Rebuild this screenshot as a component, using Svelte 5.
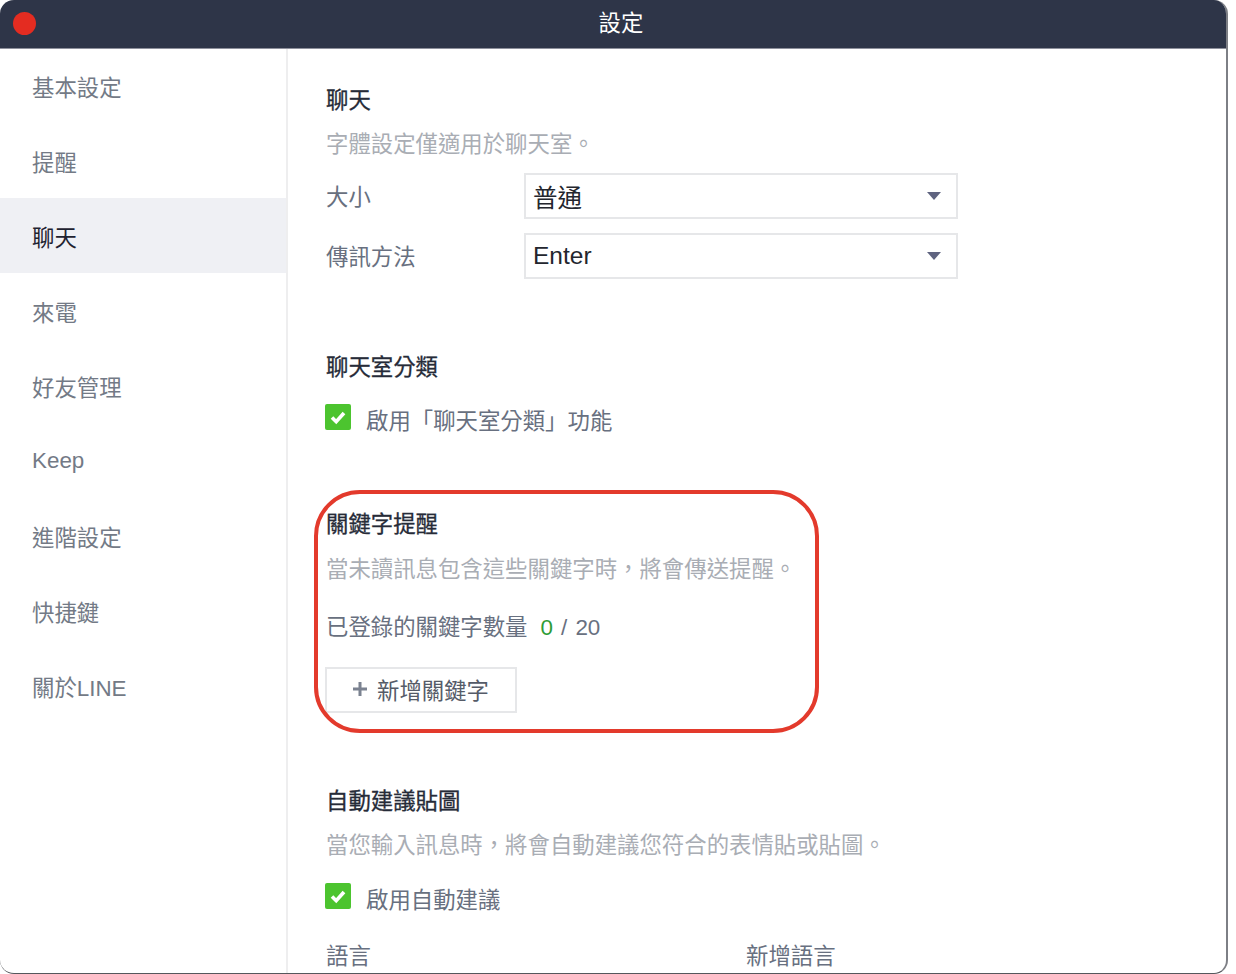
<script>
  const menu = ['基本設定', '提醒', '聊天', '來電', '好友管理', 'Keep', '進階設定', '快捷鍵', '關於LINE'];
  let active = 2;
</script>

<div class="window">
  <header class="titlebar">
    <span class="close"></span>
    <span class="title">設定</span>
  </header>

  <div class="body">
    <nav class="sidebar">
      {#each menu as item, i}
        <div class="item" class:active={i === active}>{item}</div>
      {/each}
    </nav>

    <main class="content">
      <section class="chat">
        <h2>聊天</h2>
        <p class="desc">字體設定僅適用於聊天室。</p>
        <div class="field">
          <label>大小</label>
          <div class="select"><span>普通</span><i class="caret"></i></div>
        </div>
        <div class="field">
          <label>傳訊方法</label>
          <div class="select"><span>Enter</span><i class="caret"></i></div>
        </div>
      </section>

      <section class="folders">
        <h2>聊天室分類</h2>
        <div class="check">
          <span class="box">
            <svg viewBox="0 0 26 26" width="26" height="26"><path d="M7 13.5l4.2 4.2L19 9" fill="none" stroke="#fff" stroke-width="3.6"/></svg>
          </span>
          <span class="check-label">啟用「聊天室分類」功能</span>
        </div>
      </section>

      <section class="keywords">
        <div class="ring"></div>
        <h2>關鍵字提醒</h2>
        <p class="desc">當未讀訊息包含這些關鍵字時，將會傳送提醒。</p>
        <p class="count">已登錄的關鍵字數量<b>0</b><em>/ 20</em></p>
        <button class="add">
          <svg viewBox="0 0 14 14" width="14" height="14"><path d="M7 0v14M0 7h14" stroke="#7b8290" stroke-width="3"/></svg>
          <span>新增關鍵字</span>
        </button>
      </section>

      <section class="stickers">
        <h2>自動建議貼圖</h2>
        <p class="desc">當您輸入訊息時，將會自動建議您符合的表情貼或貼圖。</p>
        <div class="check">
          <span class="box">
            <svg viewBox="0 0 26 26" width="26" height="26"><path d="M7 13.5l4.2 4.2L19 9" fill="none" stroke="#fff" stroke-width="3.6"/></svg>
          </span>
          <span class="check-label">啟用自動建議</span>
        </div>
        <div class="lang">
          <span>語言</span>
          <span>新增語言</span>
        </div>
      </section>
    </main>
  </div>
</div>

<style>
  :global(body) {
    background: #fff;
    font-family: "Liberation Sans", "Noto Sans CJK TC", sans-serif;
  }

  .window {
    width: 1228px;
    height: 974px;
    box-sizing: border-box;
    display: flex;
    flex-direction: column;
    overflow: hidden;
    background: #fff;
    border-right: 2px solid #7d7f85;
    border-bottom: 1px solid #55575c;
    border-radius: 14px;
  }

  .titlebar {
    height: 49px;
    flex: none;
    box-sizing: border-box;
    display: flex;
    align-items: center;
    justify-content: center;
    padding-left: 16px;
    position: relative;
    background: #2e3548;
    border-bottom: 1px solid #8e909c;
  }

  .close {
    position: absolute;
    left: 13px;
    top: 12px;
    width: 23px;
    height: 23px;
    border-radius: 50%;
    background: #e42c21;
  }

  .title {
    color: #fff;
    font-size: 22.4px;
    line-height: 44px;
  }

  .body {
    flex: 1;
    min-height: 0;
    display: flex;
  }

  .sidebar {
    width: 288px;
    flex: none;
    box-sizing: border-box;
    margin-top: -1px;
    border-right: 2px solid #eeeeef;
  }

  .item {
    height: 75px;
    padding-left: 32px;
    display: flex;
    align-items: center;
    font-size: 22.4px;
    color: #737a86;
  }

  .item.active {
    background: #eff0f4;
    color: #1e2230;
  }

  .content {
    flex: 1;
    min-width: 0;
    padding: 32px 0 0 38px;
    overflow: hidden;
  }

  h2 {
    margin: 0;
    font-size: 22.4px;
    font-weight: 400;
    line-height: 40px;
    color: #262b38;
    -webkit-text-stroke: 0.3px #262b38;
  }

  .desc {
    margin: 4px 0 0;
    font-size: 22.4px;
    line-height: 40px;
    color: #a9adb4;
  }

  .field {
    display: flex;
    align-items: center;
    height: 46px;
    margin-bottom: 14px;
  }

  .chat .desc {
    margin-bottom: 8px;
  }

  label {
    width: 198px;
    flex: none;
    padding-bottom: 2px;
    font-size: 22.4px;
    color: #687080;
  }

  .select {
    width: 434px;
    height: 46px;
    box-sizing: border-box;
    display: flex;
    align-items: center;
    justify-content: space-between;
    padding: 0 15px 0 7px;
    border: 2px solid #e6e7e9;
    font-size: 24.5px;
    color: #23262e;
  }

  .caret {
    width: 0;
    height: 0;
    border-left: 7px solid transparent;
    border-right: 7px solid transparent;
    border-top: 8px solid #5f6480;
  }

  .folders {
    margin-top: 69px;
  }

  .check {
    display: flex;
    align-items: center;
    gap: 15px;
    height: 26px;
    margin-top: 16px;
    margin-left: -1px;
    font-size: 22.4px;
    color: #687080;
  }

  .check-label {
    padding-top: 4px;
  }

  .box {
    width: 26px;
    height: 26px;
    flex: none;
    border-radius: 2px;
    background: #4cc42f;
  }

  .box svg {
    display: block;
  }

  .keywords {
    position: relative;
    margin-top: 75px;
  }

  .keywords .desc {
    margin-top: 5px;
  }

  .ring {
    position: absolute;
    left: -12px;
    top: -15px;
    width: 505px;
    height: 243px;
    box-sizing: border-box;
    border: 4px solid #e33a2c;
    border-radius: 46px;
    pointer-events: none;
  }

  .count {
    margin: 18px 0 0;
    font-size: 22.4px;
    line-height: 40px;
    color: #687080;
  }

  .count b {
    margin-left: 13px;
    font-weight: 400;
    color: #2e9c36;
  }

  .count em {
    margin-left: 8px;
    word-spacing: 2px;
    font-style: normal;
  }

  .add {
    display: flex;
    align-items: center;
    justify-content: center;
    gap: 10px;
    width: 192px;
    height: 46px;
    margin-top: 19px;
    margin-left: -1px;
    padding: 0 0 3px;
    background: #fff;
    border: 2px solid #e6e7e9;
    font: inherit;
    font-size: 22.4px;
    color: #555b68;
  }

  .stickers {
    margin-top: 69px;
  }

  .stickers .check {
    margin-top: 17px;
  }

  .lang {
    display: flex;
    margin-top: 28px;
    font-size: 22.4px;
    line-height: 40px;
    color: #687080;
  }

  .lang span:first-child {
    width: 420px;
  }
</style>
